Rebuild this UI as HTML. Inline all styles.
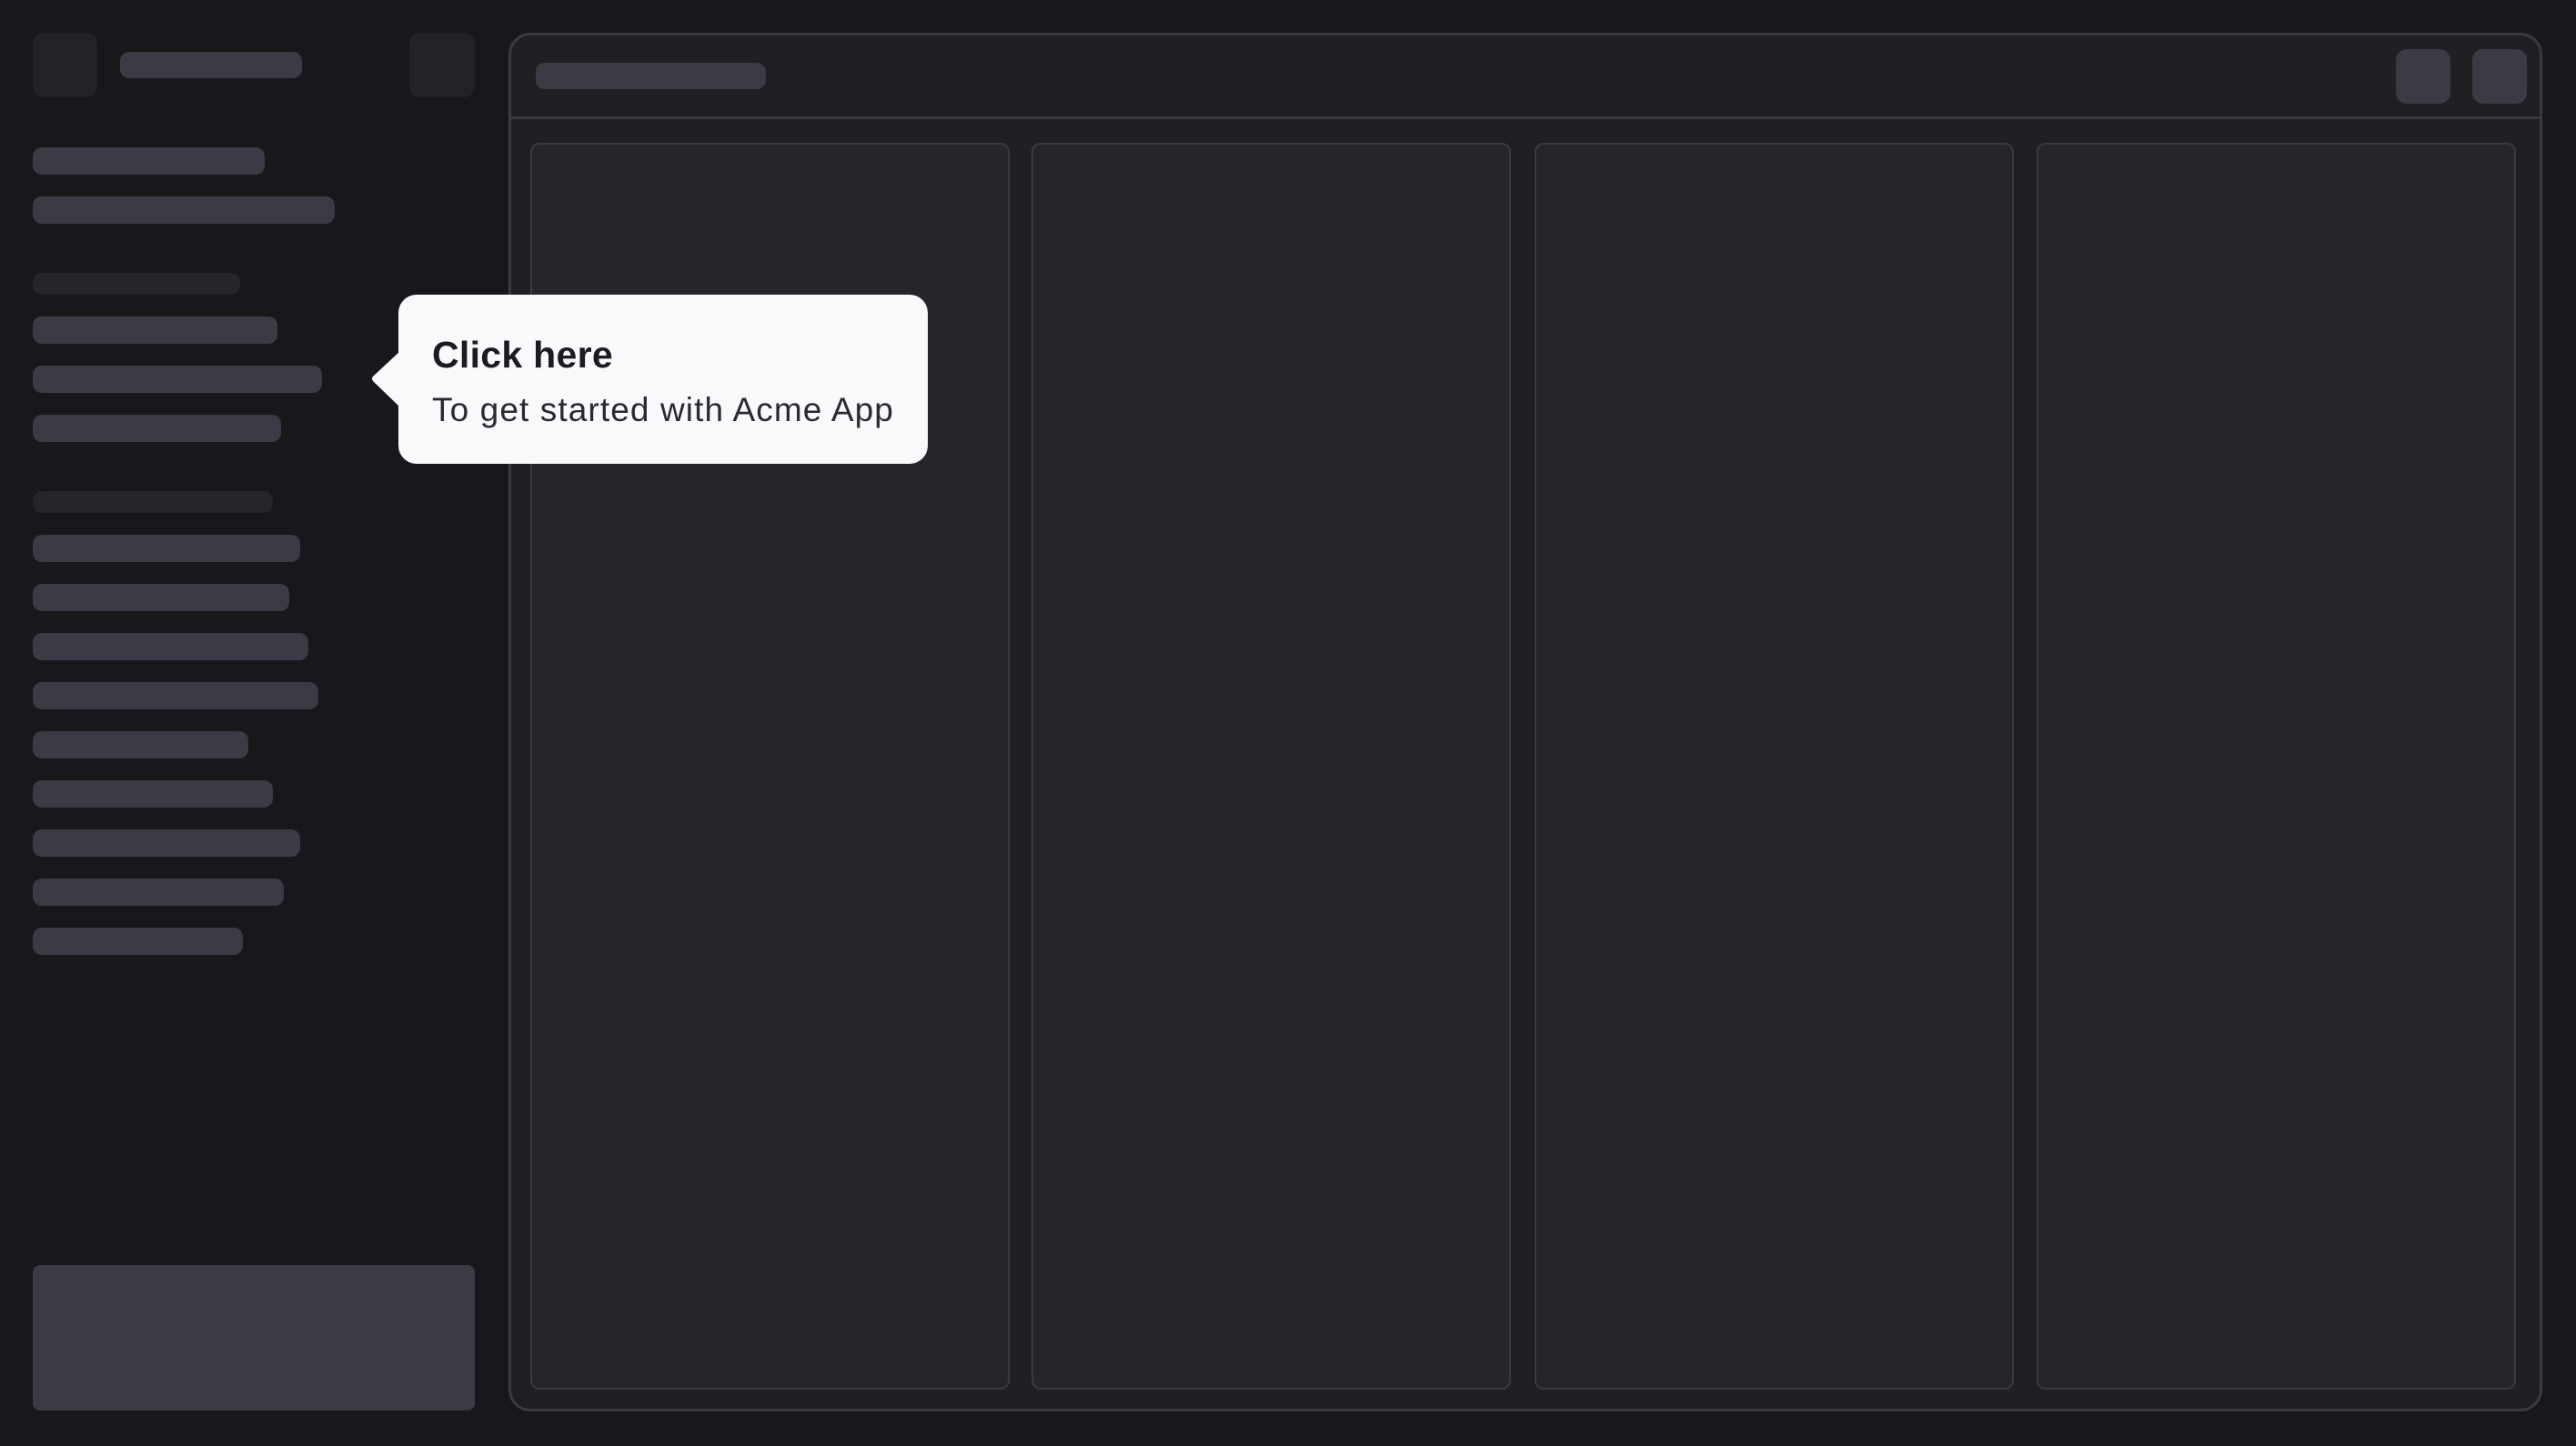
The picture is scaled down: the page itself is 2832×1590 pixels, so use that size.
<!DOCTYPE html>
<html><head><meta charset="utf-8"><style>
*{margin:0;padding:0;box-sizing:border-box}
body{width:2832px;height:1590px;background:#17171c;position:relative;overflow:hidden;font-family:"Liberation Sans",sans-serif}
.a{position:absolute}
.bar{position:absolute;left:36px;height:30px;border-radius:10px;background:#3b3b45}
.lbl{position:absolute;left:36px;height:24px;border-radius:10px;background:#25262b}
.col{position:absolute;top:157px;width:527px;height:1371px;background:#25262b;border:2px solid #3a3a42;border-radius:10px}
</style></head><body>
<div class="a" style="left:36px;top:36px;width:71px;height:71px;border-radius:12px;background:#222328"></div>
<div class="a" style="left:132px;top:57px;width:200px;height:29px;border-radius:10px;background:#3b3b45"></div>
<div class="a" style="left:450px;top:36px;width:72px;height:71px;border-radius:12px;background:#222328"></div>

<div class="bar" style="top:162px;width:255px"></div>
<div class="bar" style="top:216px;width:332px"></div>
<div class="lbl" style="top:300px;width:228px"></div>
<div class="bar" style="top:348px;width:269px"></div>
<div class="bar" style="top:402px;width:318px"></div>
<div class="bar" style="top:456px;width:273px"></div>
<div class="lbl" style="top:540px;width:264px"></div>
<div class="bar" style="top:588px;width:294px"></div>
<div class="bar" style="top:642px;width:282px"></div>
<div class="bar" style="top:696px;width:303px"></div>
<div class="bar" style="top:750px;width:314px"></div>
<div class="bar" style="top:804px;width:237px"></div>
<div class="bar" style="top:858px;width:264px"></div>
<div class="bar" style="top:912px;width:294px"></div>
<div class="bar" style="top:966px;width:276px"></div>
<div class="bar" style="top:1020px;width:231px"></div>

<div class="a" style="left:36px;top:1391px;width:486px;height:160px;border-radius:8px;background:#3b3b45"></div>

<div class="a" style="left:559px;top:36px;width:2236px;height:1516px;border:3px solid #3a3a42;border-radius:24px;background:#1f1f24"></div>
<div class="a" style="left:561px;top:128px;width:2232px;height:3px;background:#3a3a42"></div>
<div class="a" style="left:589px;top:69px;width:253px;height:29px;border-radius:10px;background:#3b3b45"></div>
<div class="a" style="left:2634px;top:54px;width:60px;height:60px;border-radius:12px;background:#3b3b45"></div>
<div class="a" style="left:2718px;top:54px;width:60px;height:60px;border-radius:12px;background:#3b3b45"></div>

<div class="col" style="left:583px"></div>
<div class="col" style="left:1134px"></div>
<div class="col" style="left:1687px"></div>
<div class="col" style="left:2239px"></div>

<svg class="a" style="left:405px;top:380px" width="40" height="74"><path d="M35 6 L6 33 Q2 36 6 40 L35 68 Z" fill="#f8f9fb"/></svg>
<div class="a" style="left:438px;top:324px;width:582px;height:186px;border-radius:20px;background:#f8f9fb">
<div class="a" style="left:37px;top:43px;font-size:41px;font-weight:bold;color:#1b1b20;white-space:nowrap;letter-spacing:0.3px">Click here</div>
<div class="a" style="left:37px;top:106px;font-size:37px;color:#2a2a30;white-space:nowrap;letter-spacing:1.1px">To get started with Acme App</div>
</div>
</body></html>
